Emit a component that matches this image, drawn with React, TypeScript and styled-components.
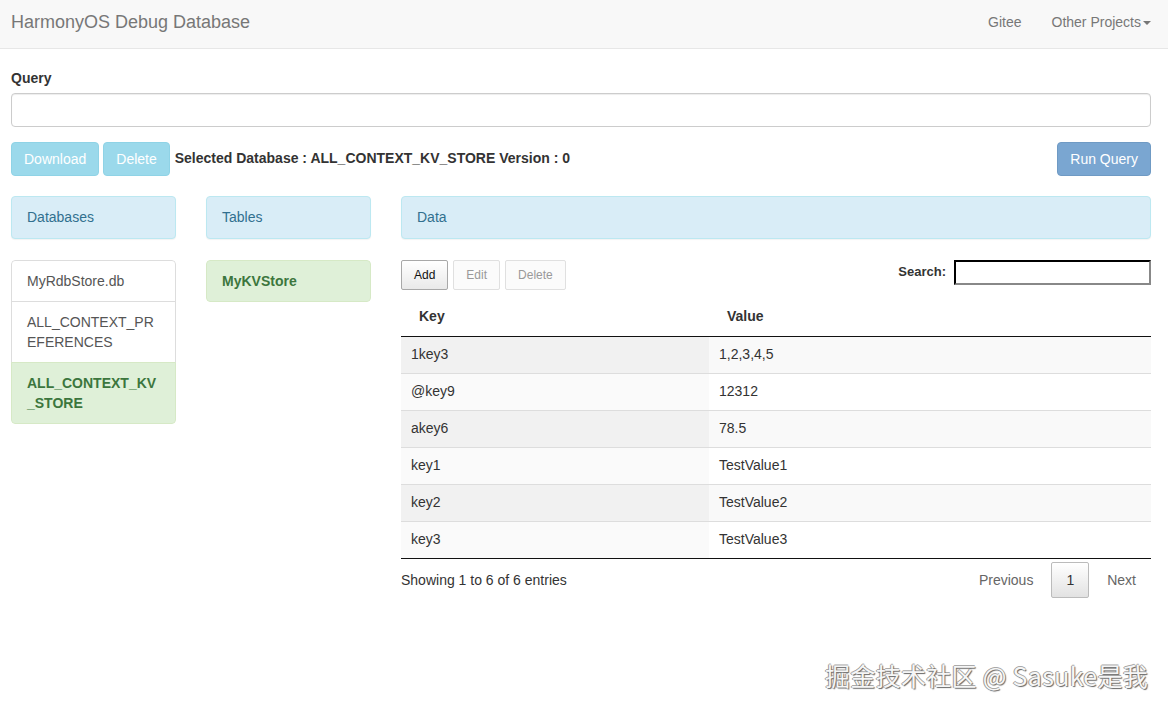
import styled, {createGlobalStyle, css} from 'styled-components';

const GlobalStyle = createGlobalStyle`
  html, body {
    margin: 0;
    padding: 0;
    background: #fff;
  }
  body {
    font-family: 'Liberation Sans', Arial, sans-serif;
    font-size: 14px;
    line-height: 1.42857;
    color: #333;
  }
  * {
    box-sizing: border-box;
  }
`;

const rows = [
  {key: '1key3', value: '1,2,3,4,5'},
  {key: '@key9', value: '12312'},
  {key: 'akey6', value: '78.5'},
  {key: 'key1', value: 'TestValue1'},
  {key: 'key2', value: 'TestValue2'},
  {key: 'key3', value: 'TestValue3'},
];

const databases = [
  {name: 'MyRdbStore.db', active: false},
  {name: 'ALL_CONTEXT_PREFERENCES', active: false},
  {name: 'ALL_CONTEXT_KV_STORE', active: true},
];

const Page = styled.div`
  min-height: 710px;
  position: relative;
`;

const NavBar = styled.nav`
  height: 49px;
  background: #f8f8f8;
  border-bottom: 1px solid #e7e7e7;
  display: flex;
  align-items: center;
  justify-content: space-between;
  padding: 0 17px 0 11px;
`;

const Brand = styled.div`
  font-size: 18px;
  color: #777;
  margin-top: -2px;
`;

const NavLinks = styled.div`
  display: flex;
  align-items: center;
  gap: 30px;
  margin-top: -2px;
`;

const NavLink = styled.a`
  color: #777;
  font-size: 14px;
  text-decoration: none;
  display: flex;
  align-items: center;
`;

const Caret = styled.span`
  display: inline-block;
  width: 0;
  height: 0;
  margin-left: 2px;
  border-top: 4px solid #777;
  border-left: 4px solid transparent;
  border-right: 4px solid transparent;
`;

const Content = styled.div`
  padding: 20px 17px 0 11px;
`;

const Label = styled.div`
  font-weight: bold;
  margin-bottom: 4px;
`;

const QueryInput = styled.input`
  display: block;
  width: 100%;
  height: 34px;
  border: 1px solid #ccc;
  border-radius: 4px;
  box-shadow: inset 0 1px 1px rgba(0, 0, 0, 0.075);
`;

const ActionRow = styled.div`
  display: flex;
  align-items: center;
  margin-top: 15px;
  gap: 4px;
`;

const btnBase = css`
  font-family: 'Liberation Sans', Arial, sans-serif;
  font-size: 14px;
  height: 34px;
  padding: 6px 12px;
  border-radius: 4px;
  border: 1px solid transparent;
  color: #fff;
`;

const InfoButton = styled.button`
  ${btnBase}
  background: #9bd9eb;
  border-color: #8fd3e6;
`;

const PrimaryButton = styled.button`
  ${btnBase}
  background: #7aa6d1;
  border-color: #6f9ac4;
  margin-left: auto;
`;

const Selected = styled.span`
  font-weight: bold;
  margin-left: 1px;
`;

const Columns = styled.div`
  display: flex;
  gap: 30px;
  margin-top: 20px;
  align-items: flex-start;
`;

const Column = styled.div<{$wide?: boolean}>`
  width: ${p => (p.$wide ? '750px' : '165px')};
  flex-shrink: 0;
`;

const PanelHeading = styled.div`
  height: 43px;
  padding: 11px 15px 9px;
  background: #d9edf7;
  border: 1px solid #bce8f1;
  border-radius: 4px;
  color: #31708f;
  box-shadow: 0 1px 1px rgba(0, 0, 0, 0.05);
  margin-bottom: 21px;
`;

const ListGroup = styled.div`
  border-radius: 4px;
  overflow: hidden;
`;

const ListItem = styled.div<{$active?: boolean}>`
  padding: 10px 15px;
  border: 1px solid #ddd;
  margin-bottom: -1px;
  word-break: break-all;
  line-height: 20px;
  background: ${p => (p.$active ? '#dff0d8' : '#fff')};
  color: ${p => (p.$active ? '#3c763d' : '#555')};
  font-weight: ${p => (p.$active ? 'bold' : 'normal')};
  border-color: ${p => (p.$active ? '#d6e9c6' : '#ddd')};
  &:first-child {
    border-top-left-radius: 4px;
    border-top-right-radius: 4px;
  }
  &:last-child {
    margin-bottom: 0;
    border-bottom-left-radius: 4px;
    border-bottom-right-radius: 4px;
  }
`;

const Toolbar = styled.div`
  display: flex;
  align-items: flex-start;
  gap: 5px;
`;

const SmallButton = styled.button<{$disabled?: boolean}>`
  font-family: 'Liberation Sans', Arial, sans-serif;
  font-size: 12px;
  height: 30px;
  padding: 5px 12px;
  border-radius: 2px;
  border: 1px solid ${p => (p.$disabled ? '#e0e0e0' : '#a8a8a8')};
  background: ${p => (p.$disabled ? '#fbfbfb' : 'linear-gradient(#fff, #e9e9e9)')};
  color: ${p => (p.$disabled ? '#999' : '#111')};
`;

const SearchBox = styled.label`
  margin-left: auto;
  display: flex;
  align-items: center;
  gap: 8px;
  font-weight: bold;
  font-size: 13px;
`;

const SearchInput = styled.input`
  width: 197px;
  height: 25px;
  border: 2px inset #767676;
  border-color: #222 #888 #888 #222;
`;

const Table = styled.table`
  width: 100%;
  border-collapse: collapse;
  margin-top: 6px;
  border-bottom: 1px solid #111;
`;

const Th = styled.th<{$w?: string}>`
  text-align: left;
  font-weight: bold;
  padding: 11px 18px 9px;
  height: 41px;
  border-bottom: 1px solid #111;
  width: ${p => p.$w ?? 'auto'};
`;

const Tr = styled.tr<{$odd: boolean}>`
  td {
    border-top: 1px solid #ddd;
  }
  &:first-child td {
    border-top: none;
  }
  td:first-child {
    background: ${p => (p.$odd ? '#f1f1f1' : '#fafafa')};
  }
  td:last-child {
    background: ${p => (p.$odd ? '#f9f9f9' : '#fff')};
  }
`;

const Td = styled.td`
  padding: 8px 10px;
  height: 37px;
  color: #333;
`;

const Footer = styled.div`
  display: flex;
  align-items: center;
  justify-content: space-between;
  margin-top: 3px;
`;

const Info = styled.div`
  padding-top: 1px;
`;

const Pager = styled.div`
  display: flex;
  align-items: center;
  gap: 3px;
`;

const PageLink = styled.span<{$current?: boolean}>`
  padding: 7px 14px;
  color: ${p => (p.$current ? '#333' : '#666')};
  border: 1px solid ${p => (p.$current ? '#bbb' : 'transparent')};
  border-radius: 2px;
  background: ${p => (p.$current ? 'linear-gradient(#fff, #e2e2e2)' : 'transparent')};
  line-height: 20px;
`;

const Watermark = styled.div`
  position: absolute;
  right: 20px;
  bottom: 16px;
  font-family: 'Noto Sans CJK SC', 'Noto Sans', sans-serif;
  font-size: 25px;
  color: #f6f6f6;
  text-shadow: 1px 1px 1px #666, -1px 0 0 #999, 0 -1px 0 #aaa;
  letter-spacing: 0.3px;
`;

export default function App() {
  return (
    <Page>
      <GlobalStyle />
      <NavBar>
        <Brand>HarmonyOS Debug Database</Brand>
        <NavLinks>
          <NavLink>Gitee</NavLink>
          <NavLink>
            Other Projects
            <Caret />
          </NavLink>
        </NavLinks>
      </NavBar>
      <Content>
        <Label>Query</Label>
        <QueryInput />
        <ActionRow>
          <InfoButton>Download</InfoButton>
          <InfoButton>Delete</InfoButton>
          <Selected>Selected Database : ALL_CONTEXT_KV_STORE Version : 0</Selected>
          <PrimaryButton>Run Query</PrimaryButton>
        </ActionRow>
        <Columns>
          <Column>
            <PanelHeading>Databases</PanelHeading>
            <ListGroup>
              {databases.map(d => (
                <ListItem key={d.name} $active={d.active}>
                  {d.name}
                </ListItem>
              ))}
            </ListGroup>
          </Column>
          <Column>
            <PanelHeading>Tables</PanelHeading>
            <ListGroup>
              <ListItem $active>MyKVStore</ListItem>
            </ListGroup>
          </Column>
          <Column $wide>
            <PanelHeading>Data</PanelHeading>
            <Toolbar>
              <SmallButton>Add</SmallButton>
              <SmallButton $disabled>Edit</SmallButton>
              <SmallButton $disabled>Delete</SmallButton>
              <SearchBox>
                Search:
                <SearchInput />
              </SearchBox>
            </Toolbar>
            <Table>
              <thead>
                <tr>
                  <Th $w="308px">Key</Th>
                  <Th>Value</Th>
                </tr>
              </thead>
              <tbody>
                {rows.map((r, i) => (
                  <Tr key={r.key} $odd={i % 2 === 0}>
                    <Td>{r.key}</Td>
                    <Td>{r.value}</Td>
                  </Tr>
                ))}
              </tbody>
            </Table>
            <Footer>
              <Info>Showing 1 to 6 of 6 entries</Info>
              <Pager>
                <PageLink>Previous</PageLink>
                <PageLink $current>1</PageLink>
                <PageLink>Next</PageLink>
              </Pager>
            </Footer>
          </Column>
        </Columns>
      </Content>
      <Watermark>掘金技术社区 @ Sasuke是我</Watermark>
    </Page>
  );
}
